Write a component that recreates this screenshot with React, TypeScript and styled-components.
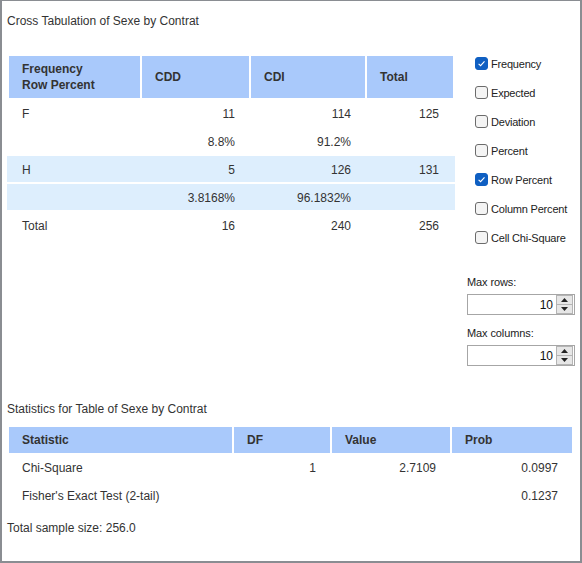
import React from 'react'
import styled, { createGlobalStyle } from 'styled-components'

const GlobalStyle = createGlobalStyle`
  html, body {
    margin: 0;
    padding: 0;
    background: #fff;
  }
  body {
    font-family: "Liberation Sans", Arial, sans-serif;
    color: #333;
  }
`

const SHADE = '#ddeefd'

const crossCols = [131, 107, 114, 86]
const statCols = [223, 96, 118, 120]

const crossRows = [
  { label: 'F', cells: ['11', '114', '125'], shaded: false },
  { label: '', cells: ['8.8%', '91.2%', ''], shaded: false },
  { label: 'H', cells: ['5', '126', '131'], shaded: true },
  { label: '', cells: ['3.8168%', '96.1832%', ''], shaded: true },
  { label: 'Total', cells: ['16', '240', '256'], shaded: false },
]

const statRows = [
  { label: 'Chi-Square', cells: ['1', '2.7109', '0.0997'] },
  { label: "Fisher's Exact Test (2-tail)", cells: ['', '', '0.1237'] },
]

const options = [
  { label: 'Frequency', checked: true },
  { label: 'Expected', checked: false },
  { label: 'Deviation', checked: false },
  { label: 'Percent', checked: false },
  { label: 'Row Percent', checked: true },
  { label: 'Column Percent', checked: false },
  { label: 'Cell Chi-Square', checked: false },
]

// table width = columns + border-spacing on each side
const tableWidth = (cols: number[]) => cols.reduce((a, b) => a + b, 0) + (cols.length + 1) * 2

const App: React.FC = () => {
  return (
    <>
      <GlobalStyle />
      <Frame>
        <TopSection>
          <LeftColumn>
            <SectionTitle>Cross Tabulation of Sexe by Contrat</SectionTitle>
            <Grid $width={tableWidth(crossCols)}>
              <colgroup>
                {crossCols.map((w, i) => (
                  <col key={i} style={{ width: w }} />
                ))}
              </colgroup>
              <thead>
                <tr>
                  <HeadCell $tall>
                    Frequency
                    <br />
                    Row Percent
                  </HeadCell>
                  <HeadCell $tall>CDD</HeadCell>
                  <HeadCell $tall>CDI</HeadCell>
                  <HeadCell $tall>Total</HeadCell>
                </tr>
              </thead>
              <tbody>
                {crossRows.map((row, i) => (
                  <tr key={i}>
                    <LabelCell $lift $shaded={row.shaded}>{row.label}</LabelCell>
                    {row.cells.map((c, j) => (
                      <NumCell key={j} $lift $shaded={row.shaded}>{c}</NumCell>
                    ))}
                  </tr>
                ))}
              </tbody>
            </Grid>
          </LeftColumn>

          <SidePanel>
            <OptionList>
              {options.map((o) => (
                <OptionRow key={o.label}>
                  <CheckBox $checked={o.checked}>
                    {o.checked && (
                      <svg width="9" height="9" viewBox="0 0 9 9">
                        <path d="M1.6 4.8 L3.6 6.7 L7.5 2.4" fill="none" stroke="#fff" strokeWidth="1.1" />
                      </svg>
                    )}
                  </CheckBox>
                  <OptionLabel>{o.label}</OptionLabel>
                </OptionRow>
              ))}
            </OptionList>

            <FieldLabel>Max rows:</FieldLabel>
            <Spinner value="10" />
            <FieldLabel>Max columns:</FieldLabel>
            <Spinner value="10" />
          </SidePanel>
        </TopSection>

        <SectionTitle $gap={25}>Statistics for Table of Sexe by Contrat</SectionTitle>
        <Grid $width={tableWidth(statCols)}>
          <colgroup>
            {statCols.map((w, i) => (
              <col key={i} style={{ width: w }} />
            ))}
          </colgroup>
          <thead>
            <tr>
              <HeadCell>Statistic</HeadCell>
              <HeadCell>DF</HeadCell>
              <HeadCell>Value</HeadCell>
              <HeadCell>Prob</HeadCell>
            </tr>
          </thead>
          <tbody>
            {statRows.map((row, i) => (
              <tr key={i}>
                <LabelCell>{row.label}</LabelCell>
                {row.cells.map((c, j) => (
                  <NumCell key={j}>{c}</NumCell>
                ))}
              </tr>
            ))}
          </tbody>
        </Grid>
        <Footer>Total sample size: 256.0</Footer>
      </Frame>
    </>
  )
}

const Spinner: React.FC<{ value: string }> = ({ value }) => (
  <SpinBox>
    <SpinValue>{value}</SpinValue>
    <SpinButtons>
      <SpinButton>
        <svg width="7" height="4" viewBox="0 0 7 4">
          <path d="M0 4 L3.5 0 L7 4 Z" fill="#222" />
        </svg>
      </SpinButton>
      <SpinButton>
        <svg width="7" height="4" viewBox="0 0 7 4">
          <path d="M0 0 L3.5 4 L7 0 Z" fill="#222" />
        </svg>
      </SpinButton>
    </SpinButtons>
  </SpinBox>
)

const Frame = styled.div`
  box-sizing: border-box;
  width: 582px;
  height: 563px;
  border: 2px solid #8a8d92;
  border-top-width: 1px;
  padding: 13px 0 0 5px;
  overflow: hidden;
`

const TopSection = styled.div`
  display: flex;
  align-items: flex-start;
`

const LeftColumn = styled.div`
  display: flex;
  flex-direction: column;
  width: 460px;
`

const SectionTitle = styled.div<{ $gap?: number }>`
  font-size: 12px;
  line-height: 14px;
  color: #333;
  margin-top: ${(p) => p.$gap ?? 0}px;
  margin-bottom: ${(p) => (p.$gap ? 9 : 26)}px;
`

const Grid = styled.table<{ $width: number }>`
  border-collapse: separate;
  border-spacing: 2px;
  table-layout: fixed;
  width: ${(p) => p.$width}px;
  font-size: 12px;
`

const HeadCell = styled.th<{ $tall?: boolean }>`
  background: #a9c9fb;
  color: #333;
  font-weight: bold;
  text-align: left;
  height: ${(p) => (p.$tall ? 42 : 26)}px;
  padding: 0 14px 0 13px;
  line-height: 16px;
  vertical-align: middle;
  box-sizing: border-box;
`

// shaded rows run unbroken across the column gaps, so the fill is pushed
// 2px sideways into the border-spacing
const LabelCell = styled.td<{ $lift?: boolean; $shaded?: boolean }>`
  height: 26px;
  box-sizing: border-box;
  padding: ${(p) => (p.$lift ? '2px 14px 0 13px' : '0 14px 0 13px')};
  text-align: left;
  white-space: nowrap;
  color: #333;
  background: ${(p) => (p.$shaded ? SHADE : 'transparent')};
  box-shadow: ${(p) => (p.$shaded ? `-2px 0 0 ${SHADE}, 2px 0 0 ${SHADE}` : 'none')};
`

const NumCell = styled(LabelCell)`
  text-align: right;
`

const SidePanel = styled.div`
  display: flex;
  flex-direction: column;
  margin-top: 35px;
  width: 108px;
`

const OptionList = styled.div`
  display: flex;
  flex-direction: column;
  margin-bottom: 23px;
`

const OptionRow = styled.div`
  display: flex;
  align-items: center;
  height: 29px;
  padding-left: 8px;
`

const CheckBox = styled.span<{ $checked: boolean }>`
  box-sizing: border-box;
  width: 13px;
  height: 13px;
  border-radius: 3px;
  display: flex;
  align-items: center;
  justify-content: center;
  background: ${(p) => (p.$checked ? '#0f5fc2' : '#f4f4f4')};
  border: 1px solid ${(p) => (p.$checked ? '#0f5fc2' : '#6b6b6b')};
  margin-right: 3px;
`

const OptionLabel = styled.span`
  font-size: 11px;
  letter-spacing: -0.2px;
  color: #222;
`

const FieldLabel = styled.div`
  font-size: 11px;
  line-height: 14px;
  letter-spacing: -0.1px;
  color: #222;
  margin-bottom: 5px;
`

const SpinBox = styled.div`
  box-sizing: border-box;
  display: flex;
  align-items: center;
  width: 108px;
  height: 21px;
  border: 1px solid #a6a6a6;
  background: #fff;
  margin-bottom: 11px;
`

const SpinValue = styled.span`
  flex: 1;
  text-align: right;
  font-size: 12px;
  color: #111;
  padding-right: 3px;
`

const SpinButtons = styled.div`
  display: flex;
  flex-direction: column;
  width: 15px;
  height: 17px;
  margin-right: 1px;
  border: 1px solid #b4b4b4;
`

const SpinButton = styled.div`
  flex: 1;
  display: flex;
  align-items: center;
  justify-content: center;
  background: #e6e6e6;
  & + & {
    border-top: 1px solid #b4b4b4;
  }
`

const Footer = styled.div`
  font-size: 12px;
  line-height: 14px;
  color: #333;
  margin-top: 10px;
`

export default App
